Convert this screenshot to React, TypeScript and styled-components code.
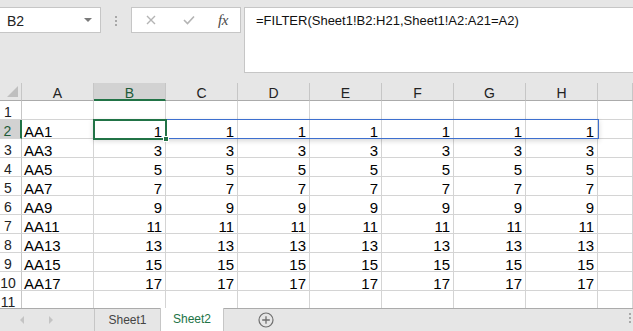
import React from "react";
import styled, { createGlobalStyle, css } from "styled-components";

const Global = createGlobalStyle`
  html, body { margin: 0; padding: 0; background: #fff; overflow: hidden; }
  body { font-family: "Liberation Sans", Arial, sans-serif; }
  * { box-sizing: border-box; }
`;

const GREEN = "#217346";
const GRID = "#d4d4d4";
const HEAD_BG = "#e6e6e6";
const TOOL_BG = "#e6e6e6";

const Page = styled.div`
  width: 633px;
  height: 331px;
  display: flex;
  flex-direction: column;
  overflow: hidden;
`;

const Toolbar = styled.div`
  height: 83px;
  flex: none;
  background: ${TOOL_BG};
  display: flex;
  align-items: flex-start;
  padding-top: 7px;
`;

const NameBox = styled.div`
  width: 101px;
  height: 26px;
  background: #fff;
  border: 1px solid #c6c6c6;
  border-left: none;
  display: flex;
  align-items: center;
  justify-content: space-between;
  padding: 1px 8px 0 7px;
  font-size: 14px;
  color: #222;
`;

const Caret = styled.span`
  width: 0;
  height: 0;
  border-left: 4px solid transparent;
  border-right: 4px solid transparent;
  border-top: 4px solid #7a7a7a;
  margin-bottom: 2px;
`;

const Grip = styled.div`
  margin: 9px 0 0 14px;
  display: flex;
  flex-direction: column;
  gap: 2px;
  width: 2px;
  span {
    width: 2px;
    height: 2px;
    background: #a8a8a8;
  }
`;

const FuncBox = styled.div`
  margin-left: 14px;
  width: 110px;
  height: 26px;
  background: #fff;
  border: 1px solid #c6c6c6;
  display: flex;
  align-items: center;
  padding-left: 14px;
  gap: 0;
`;

const FuncIcon = styled.span<{ $w: number }>`
  width: ${(p) => p.$w}px;
  display: flex;
  align-items: center;
`;

const Fx = styled.span`
  font-family: "Liberation Serif", "Times New Roman", serif;
  font-style: italic;
  font-size: 15px;
  color: #4a4a4a;
  letter-spacing: -0.5px;
  margin-left: 2px;
`;

const FormulaInput = styled.div`
  margin-left: 3px;
  flex: 1;
  height: 66px;
  background: #fff;
  border: 1px solid #c6c6c6;
  border-right: none;
  padding: 5px 11px;
  font-size: 13px;
  line-height: 16px;
  color: #111;
  white-space: nowrap;
`;

const Sheet = styled.div`
  position: relative;
  flex: 1;
  overflow: hidden;
  background: #fff;
`;

const Row = styled.div<{ $head?: boolean }>`
  display: flex;
  height: ${(p) => (p.$head ? 18 : 19)}px;
`;

const Corner = styled.div`
  width: 22px;
  flex: none;
  background: ${HEAD_BG};
  border-right: 1px solid #c6c6c6;
  border-bottom: 1px solid #ababab;
  position: relative;
`;

const CornerTri = styled.span`
  position: absolute;
  right: 3px;
  bottom: 3px;
  width: 0;
  height: 0;
  border-left: 11px solid transparent;
  border-bottom: 11px solid #bfbfbf;
`;

const ColHead = styled.div<{ $sel?: boolean; $fill?: boolean }>`
  width: ${(p) => (p.$fill ? "auto" : "72px")};
  flex: ${(p) => (p.$fill ? "1" : "none")};
  background: ${(p) => (p.$sel ? "#d2d2d2" : HEAD_BG)};
  border-right: 1px solid #c6c6c6;
  border-bottom: ${(p) => (p.$sel ? `2px solid ${GREEN}` : "1px solid #ababab")};
  text-align: center;
  font-size: 14px;
  line-height: 17px;
  padding-top: 2px;
  color: ${(p) => (p.$sel ? "#1e5b38" : "#222")};
`;

const RowHead = styled.div<{ $sel?: boolean }>`
  width: 22px;
  flex: none;
  background: ${(p) => (p.$sel ? "#d2d2d2" : "#fff")};
  border-right: ${(p) => (p.$sel ? `2px solid ${GREEN}` : "1px solid #c6c6c6")};
  border-bottom: 1px solid ${GRID};
  font-size: 14px;
  line-height: 15px;
  padding: 4px 5px 0 0;
  text-align: center;
  white-space: nowrap;
  color: ${(p) => (p.$sel ? "#1e5b38" : "#222")};
  overflow: visible;
`;

const Cell = styled.div<{ $num?: boolean; $fill?: boolean }>`
  width: ${(p) => (p.$fill ? "auto" : "72px")};
  flex: ${(p) => (p.$fill ? "1" : "none")};
  border-right: 1px solid ${GRID};
  border-bottom: 1px solid ${GRID};
  font-size: 15px;
  line-height: 15px;
  padding: 4px 3px 0 2px;
  color: #000;
  white-space: nowrap;
  ${(p) =>
    p.$num &&
    css`
      text-align: right;
    `}
`;

const SpillBox = styled.div`
  position: absolute;
  left: 93px;
  top: 36px;
  width: 506px;
  height: 20px;
  border: 1px solid #3d6fcf;
  box-shadow: 0 2px 5px rgba(0, 0, 0, 0.16);
  pointer-events: none;
`;

const SelBox = styled.div`
  position: absolute;
  left: 93px;
  top: 36px;
  width: 74px;
  height: 21px;
  border: 2px solid ${GREEN};
  pointer-events: none;
`;

const FillHandle = styled.span`
  position: absolute;
  right: -4px;
  bottom: -4px;
  width: 6px;
  height: 6px;
  background: ${GREEN};
  border: 1px solid #fff;
`;

const TabBar = styled.div`
  height: 23px;
  flex: none;
  background: ${TOOL_BG};
  border-top: 1px solid #ababab;
  display: flex;
  align-items: stretch;
  position: relative;
`;

const NavArea = styled.div`
  width: 95px;
  border-right: 1px solid #c6c6c6;
  display: flex;
  align-items: center;
  padding-left: 20px;
  gap: 25px;
`;

const Arrow = styled.span<{ $dir: "l" | "r" }>`
  width: 0;
  height: 0;
  border-top: 4px solid transparent;
  border-bottom: 4px solid transparent;
  ${(p) =>
    p.$dir === "l"
      ? css`
          border-right: 4px solid #c4c4c4;
        `
      : css`
          border-left: 4px solid #c4c4c4;
        `}
`;

const Tab = styled.div<{ $active?: boolean; $w: number }>`
  width: ${(p) => p.$w}px;
  display: flex;
  align-items: center;
  justify-content: center;
  font-size: 12px;
  color: ${(p) => (p.$active ? GREEN : "#444")};
  background: ${(p) => (p.$active ? "#fff" : "transparent")};
  margin-top: ${(p) => (p.$active ? "-1px" : "0")};
  border-left: ${(p) => (p.$active ? "1px solid #c6c6c6" : "none")};
  border-right: ${(p) => (p.$active ? "1px solid #c6c6c6" : "none")};
  padding-bottom: 1px;
`;

const AddBtn = styled.div`
  margin-left: 34px;
  display: flex;
  align-items: center;
`;

const MoreDots = styled.div`
  position: absolute;
  right: 2px;
  top: 4px;
  display: flex;
  flex-direction: column;
  gap: 2px;
  span {
    width: 2px;
    height: 2px;
    background: #a8a8a8;
  }
`;

const cols = ["A", "B", "C", "D", "E", "F", "G", "H"];
const dataRows = [1, 3, 5, 7, 9, 11, 13, 15, 17];

export default function App() {
  return (
    <>
      <Global />
      <Page>
        <Toolbar>
          <NameBox>
            <span>B2</span>
            <Caret />
          </NameBox>
          <Grip>
            <span />
            <span />
            <span />
          </Grip>
          <FuncBox>
            <FuncIcon $w={37}>
              <svg width="10" height="10" viewBox="0 0 10 10">
                <path d="M1 1 L9 9 M9 1 L1 9" stroke="#b4b4b4" strokeWidth="1.4" fill="none" />
              </svg>
            </FuncIcon>
            <FuncIcon $w={33}>
              <svg width="12" height="10" viewBox="0 0 12 10">
                <path d="M1 5 L4.5 8.5 L11 1.5" stroke="#b4b4b4" strokeWidth="1.6" fill="none" />
              </svg>
            </FuncIcon>
            <Fx>fx</Fx>
          </FuncBox>
          <FormulaInput>=FILTER(Sheet1!B2:H21,Sheet1!A2:A21=A2)</FormulaInput>
        </Toolbar>
        <Sheet>
          <Row $head>
            <Corner>
              <CornerTri />
            </Corner>
            {cols.map((c) => (
              <ColHead key={c} $sel={c === "B"}>
                {c}
              </ColHead>
            ))}
            <ColHead $fill />
          </Row>
          <Row>
            <RowHead>1</RowHead>
            {cols.map((c) => (
              <Cell key={c} />
            ))}
            <Cell $fill />
          </Row>
          {dataRows.map((v, i) => (
            <Row key={v}>
              <RowHead $sel={i === 0}>{i + 2}</RowHead>
              <Cell>AA{v}</Cell>
              {cols.slice(1).map((c) => (
                <Cell key={c} $num>
                  {v}
                </Cell>
              ))}
              <Cell $fill />
            </Row>
          ))}
          <Row>
            <RowHead>11</RowHead>
            {cols.map((c) => (
              <Cell key={c} />
            ))}
            <Cell $fill />
          </Row>
          <SpillBox />
          <SelBox>
            <FillHandle />
          </SelBox>
        </Sheet>
        <TabBar>
          <NavArea>
            <Arrow $dir="l" />
            <Arrow $dir="r" />
          </NavArea>
          <Tab $w={65}>Sheet1</Tab>
          <Tab $w={64} $active>
            Sheet2
          </Tab>
          <AddBtn>
            <svg width="16" height="16" viewBox="0 0 16 16">
              <circle cx="8" cy="8" r="7" stroke="#6f6f6f" strokeWidth="1.2" fill="none" />
              <path d="M8 4.2 V11.8 M4.2 8 H11.8" stroke="#6f6f6f" strokeWidth="1.3" />
            </svg>
          </AddBtn>
          <MoreDots>
            <span />
            <span />
            <span />
          </MoreDots>
        </TabBar>
      </Page>
    </>
  );
}
